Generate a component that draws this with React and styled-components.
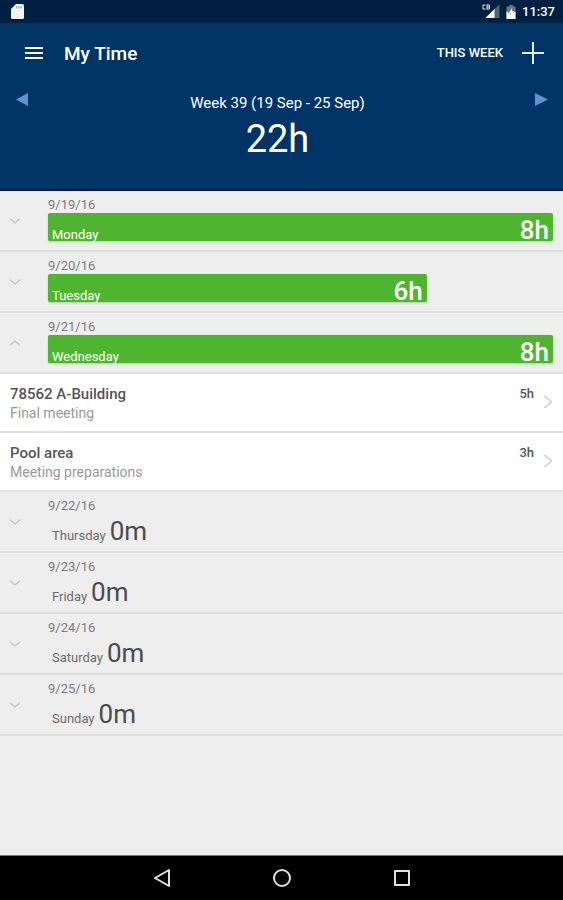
import React, { useState } from "react";
import styled, { createGlobalStyle } from "styled-components";

const GlobalStyle = createGlobalStyle`
  *, *::before, *::after { box-sizing: border-box; }
  body {
    margin: 0;
    background: #eeeeee;
    font-family: Roboto, "Liberation Sans", sans-serif;
  }
  h1, h2, p { margin: 0; font-weight: 400; }
  button { border: 0; padding: 0; background: none; font: inherit; color: inherit; cursor: pointer; }
  svg { display: block; flex: none; }
`;

const Screen = styled.div`
  display: flex;
  flex-direction: column;
  min-height: 100vh;
`;

const StatusBar = styled.div`
  display: flex;
  align-items: center;
  height: 23px;
  padding: 0 8px 0 11px;
  background: #011f40;
  color: #ffffff;
`;

const StatusIcons = styled.div`
  display: flex;
  align-items: center;
  gap: 6px;
  margin-left: auto;
`;

const Clock = styled.time`
  font-size: 13px;
  font-weight: 500;
  line-height: 24px;
`;

const Header = styled.header`
  height: 168px;
  background: #003466;
  border-bottom: 2px solid #00124f;
  color: #ffffff;
`;

const Toolbar = styled.div`
  display: flex;
  align-items: center;
  height: 60px;
  padding: 0 18px 0 24px;
`;

const IconButton = styled.button`
  display: grid;
  place-items: center;
`;

const Title = styled.h1`
  margin-left: 20px;
  padding-top: 2px;
  font-size: 19px;
  font-weight: 500;
  line-height: 24px;
`;

const ThisWeek = styled.button`
  && { font-size: 13px; font-weight: 500; line-height: 20px; }
  margin: 0 18px 0 auto;
`;

const WeekNav = styled.div`
  display: flex;
  align-items: flex-start;
  justify-content: space-between;
  padding: 10px 15px 0;
`;

const WeekSummary = styled.div`
  padding-right: 8px;
  text-align: center;
`;

const WeekLabel = styled.h2`
  font-size: 15px;
  line-height: 20px;
`;

const WeekTotal = styled.p`
  font-size: 38px;
  line-height: 52px;
`;

const DayList = styled.main`
  flex: 1;
`;

const DayRow = styled.button`
  display: grid;
  grid-template-columns: 48px 1fr;
  align-items: center;
  width: 100%;
  height: 61px;
  padding-right: 10px;
  border-bottom: 2px solid #dedede;
  text-align: left;
`;

const Chevron = styled.svg`
  margin-left: 9px;
  transform: ${(p) => (p.$open ? "rotate(180deg)" : "none")};
`;

const DayBody = styled.span`
  display: block;
  height: 100%;
  padding-top: 6px;
`;

const DateText = styled.span`
  display: block;
  font-size: 13px;
  line-height: 16px;
  color: #7c7c7c;
`;

const Bar = styled.span`
  display: flex;
  align-items: baseline;
  justify-content: space-between;
  height: 28px;
  padding: 0 4px;
  border-radius: 2px;
  background: #4fb531;
  box-shadow: 0 1px 2px #a9d59c;
  color: #ffffff;
`;

const EmptyDay = styled.span`
  display: flex;
  align-items: baseline;
  gap: 4px;
  padding-left: 4px;
  color: #4c4c4c;
`;

const DayName = styled.span`
  font-size: 13px;
  line-height: 16px;
  color: ${(p) => (p.$onBar ? "#ffffff" : "#6b6b6b")};
`;

const Amount = styled.span`
  font-size: 26px;
  line-height: 35px;
  font-weight: ${(p) => (p.$strong ? 500 : 400)};
`;

const Task = styled.a`
  display: flex;
  height: 59px;
  padding: 10px 10px 0;
  border-bottom: 2px solid #e2e2e2;
  background: #ffffff;
  color: #555555;
  text-decoration: none;
`;

const TaskText = styled.span`
  flex: 1;
`;

const TaskTitle = styled.span`
  display: block;
  font-size: 15px;
  line-height: 20px;
  font-weight: 500;
`;

const TaskNote = styled.span`
  display: block;
  font-size: 14px;
  line-height: 18px;
  color: #999999;
`;

const TaskHours = styled.span`
  margin-right: 9px;
  font-size: 13px;
  line-height: 20px;
  font-weight: 500;
`;

const TaskArrow = styled.svg`
  margin-top: 11px;
`;

const SystemNav = styled.nav`
  display: flex;
  align-items: center;
  justify-content: center;
  gap: 96px;
  height: 45px;
  border-top: 1px solid #777777;
  background: #000000;
`;

const days = [
  { date: "9/19/16", name: "Monday", hours: 8, tasks: [] },
  { date: "9/20/16", name: "Tuesday", hours: 6, tasks: [] },
  {
    date: "9/21/16",
    name: "Wednesday",
    hours: 8,
    tasks: [
      { title: "78562 A-Building", note: "Final meeting", hours: "5h" },
      { title: "Pool area", note: "Meeting preparations", hours: "3h" },
    ],
  },
  { date: "9/22/16", name: "Thursday", hours: 0, tasks: [] },
  { date: "9/23/16", name: "Friday", hours: 0, tasks: [] },
  { date: "9/24/16", name: "Saturday", hours: 0, tasks: [] },
  { date: "9/25/16", name: "Sunday", hours: 0, tasks: [] },
];

const FULL_DAY = 8;

function Day({ day, open, onToggle }) {
  return (
    <>
      <DayRow type="button" aria-expanded={open} onClick={onToggle}>
        <Chevron $open={open} width="12" height="6" viewBox="0 0 12 6" fill="none" stroke="#c4c4c4" strokeWidth="1.3" aria-hidden="true">
          <path d="M1 .8 6 5 11 .8" />
        </Chevron>
        <DayBody>
          <DateText>{day.date}</DateText>
          {day.hours > 0 ? (
            <Bar style={{ width: `${(day.hours / FULL_DAY) * 100}%` }}>
              <DayName $onBar>{day.name}</DayName>
              <Amount $strong>{day.hours}h</Amount>
            </Bar>
          ) : (
            <EmptyDay>
              <DayName>{day.name}</DayName>
              <Amount>0m</Amount>
            </EmptyDay>
          )}
        </DayBody>
      </DayRow>
      {open &&
        day.tasks.map((task) => (
          <Task href="#task" key={task.title}>
            <TaskText>
              <TaskTitle>{task.title}</TaskTitle>
              <TaskNote>{task.note}</TaskNote>
            </TaskText>
            <TaskHours>{task.hours}</TaskHours>
            <TaskArrow width="10" height="14" viewBox="0 0 10 14" fill="none" stroke="#cccccc" strokeWidth="1.4" aria-hidden="true">
              <path d="M1.5 1 8.5 7 1.5 13" />
            </TaskArrow>
          </Task>
        ))}
    </>
  );
}

export default function App() {
  const [openDay, setOpenDay] = useState("Wednesday");
  return (
    <Screen>
      <GlobalStyle />
      <StatusBar>
        <svg width="13" height="15" viewBox="0 0 13 15" aria-hidden="true">
          <path d="M5 0h6.5Q13 0 13 1.5v12q0 1.500-1.500 1.500h-10Q0 15 0 13.500V5Z" fill="#f4f4f4" />
          <path d="M5.500 2v2.500M7.800 2v2.500M10.100 2v2.500" stroke="#9aa3ad" strokeWidth="1.200" />
        </svg>
        <StatusIcons>
          <svg width="18" height="15" viewBox="0 0 18 15" aria-hidden="true">
            <path d="M17.500 0v14H3.500Z" fill="#4f647b" />
            <path d="M12.500 5v9H3.500Z" fill="#ffffff" />
            <path d="M0 0h9v6H5L2 6 0 5Z" fill="#011f40" />
            <path d="M3.500 1H1v4h2.500M5 .500v5M5 1h2.500v4H5M5 3h2.500" fill="none" stroke="#dfe5ec" />
          </svg>
          <svg width="10" height="14" viewBox="0 0 10 14" aria-hidden="true">
            <path d="M3 0h4v1.500h2.500V14H.500V1.500H3Z" fill="#65788d" />
            <path d="M.500 6.500 5 9l4.500-2.500V14h-9Z" fill="#ffffff" />
            <path d="M5.800 3 3 8h2v3l3-5H5.800Z" fill="#ffffff" />
          </svg>
          <Clock>11:37</Clock>
        </StatusIcons>
      </StatusBar>

      <Header>
        <Toolbar>
          <IconButton type="button" aria-label="Menu">
            <svg width="20" height="14" viewBox="0 0 20 14" stroke="#ffffff" strokeWidth="2" aria-hidden="true">
              <path d="M1 2h18M1 7h18M1 12h18" />
            </svg>
          </IconButton>
          <Title>My Time</Title>
          <ThisWeek type="button">THIS WEEK</ThisWeek>
          <IconButton type="button" aria-label="Add time">
            <svg width="24" height="24" viewBox="0 0 24 24" stroke="#e8edf2" strokeWidth="2" aria-hidden="true">
              <path d="M12 1v22M1 12h22" />
            </svg>
          </IconButton>
        </Toolbar>
        <WeekNav>
          <IconButton type="button" aria-label="Previous week">
            <svg width="13" height="13" viewBox="0 0 13 13" fill="#5a95cd" aria-hidden="true">
              <path d="M13 0v13L1 6.500Z" />
            </svg>
          </IconButton>
          <WeekSummary>
            <WeekLabel>Week 39 (19 Sep - 25 Sep)</WeekLabel>
            <WeekTotal>22h</WeekTotal>
          </WeekSummary>
          <IconButton type="button" aria-label="Next week">
            <svg width="13" height="13" viewBox="0 0 13 13" fill="#5a95cd" aria-hidden="true">
              <path d="M0 0v13l13-6.500Z" />
            </svg>
          </IconButton>
        </WeekNav>
      </Header>

      <DayList>
        {days.map((day) => (
          <Day
            key={day.name}
            day={day}
            open={openDay === day.name}
            onToggle={() => setOpenDay(openDay === day.name ? null : day.name)}
          />
        ))}
      </DayList>

      <SystemNav aria-label="System">
        <IconButton type="button" aria-label="Back">
          <svg width="24" height="24" viewBox="0 0 24 24" fill="none" stroke="#e0e0e0" strokeWidth="2" strokeLinejoin="round" aria-hidden="true">
            <path d="M19 4v16L5 12Z" />
          </svg>
        </IconButton>
        <IconButton type="button" aria-label="Home">
          <svg width="24" height="24" viewBox="0 0 24 24" fill="none" stroke="#e0e0e0" strokeWidth="2" aria-hidden="true">
            <circle cx="12" cy="12" r="8" />
          </svg>
        </IconButton>
        <IconButton type="button" aria-label="Recent apps">
          <svg width="24" height="24" viewBox="0 0 24 24" fill="none" stroke="#e0e0e0" strokeWidth="2" strokeLinejoin="round" aria-hidden="true">
            <path d="M5 5h14v14H5Z" />
          </svg>
        </IconButton>
      </SystemNav>
    </Screen>
  );
}
